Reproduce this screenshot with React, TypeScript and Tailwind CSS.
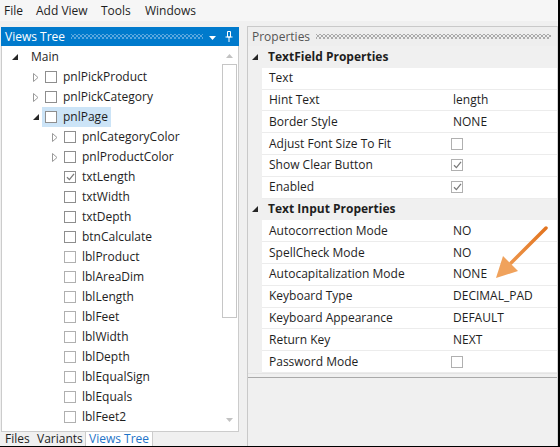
import React from "react";

type Node = {
  label: string;
  level: number;
  exp?: "open" | "closed";
  checked?: boolean;
  selected?: boolean;
};

const tree: Node[] = [
  { label: "Main", level: 0, exp: "open" },
  { label: "pnlPickProduct", level: 1, exp: "closed" },
  { label: "pnlPickCategory", level: 1, exp: "closed" },
  { label: "pnlPage", level: 1, exp: "open", selected: true },
  { label: "pnlCategoryColor", level: 2, exp: "closed" },
  { label: "pnlProductColor", level: 2, exp: "closed" },
  { label: "txtLength", level: 2, checked: true },
  { label: "txtWidth", level: 2 },
  { label: "txtDepth", level: 2 },
  { label: "btnCalculate", level: 2 },
  { label: "lblProduct", level: 2 },
  { label: "lblAreaDim", level: 2 },
  { label: "lblLength", level: 2 },
  { label: "lblFeet", level: 2 },
  { label: "lblWidth", level: 2 },
  { label: "lblDepth", level: 2 },
  { label: "lblEqualSign", level: 2 },
  { label: "lblEquals", level: 2 },
  { label: "lblFeet2", level: 2 },
];

type Prop =
  | { cat: string }
  | { name: string; value?: string; check?: "off" | "on" };

const props: Prop[] = [
  { cat: "TextField Properties" },
  { name: "Text" },
  { name: "Hint Text", value: "length" },
  { name: "Border Style", value: "NONE" },
  { name: "Adjust Font Size To Fit", check: "off" },
  { name: "Show Clear Button", check: "on" },
  { name: "Enabled", check: "on" },
  { cat: "Text Input Properties" },
  { name: "Autocorrection Mode", value: "NO" },
  { name: "SpellCheck Mode", value: "NO" },
  { name: "Autocapitalization Mode", value: "NONE" },
  { name: "Keyboard Type", value: "DECIMAL_PAD" },
  { name: "Keyboard Appearance", value: "DEFAULT" },
  { name: "Return Key", value: "NEXT" },
  { name: "Password Mode", check: "off" },
];

function Expander({ open }: { open: boolean }) {
  return open ? (
    <svg width="6" height="6" viewBox="0 0 6 6">
      <polygon points="6,0 6,6 0,6" fill="#262626" />
    </svg>
  ) : (
    <svg width="6" height="9" viewBox="0 0 6 9">
      <polygon points="0.5,0.5 5,4.5 0.5,8.5" fill="none" stroke="#9a9a9a" />
    </svg>
  );
}

function Checkbox({ checked, light }: { checked?: boolean; light?: boolean }) {
  return (
    <span
      className={`w-[12px] h-[12px] shrink-0 bg-white border flex items-center justify-center ${
        light ? "border-[#b0b0b0]" : "border-[#8e8e8e]"
      }`}
    >
      {checked && (
        <svg width="9" height="8" viewBox="0 0 9 8">
          <path d="M1 4.2 L3.4 6.6 L8 0.8" fill="none" stroke="#7a7a7a" strokeWidth="1.3" />
        </svg>
      )}
    </span>
  );
}

// dotted drag grip in tool window headers
function Grip({ dot }: { dot: string }) {
  return (
    <div className="flex-1 h-[5px] mx-[6px] overflow-hidden">
      <div className={`w-full h-full bg-[length:4px_4px] bg-[position:0_0,2px_2px] ${dot}`} />
    </div>
  );
}

export default function App() {
  return (
    <div className="relative w-[560px] h-[447px] overflow-hidden bg-[#f0f0f0] border-r-2 border-b border-black text-[12px] text-[#1e1e1e] font-['Open_Sans',sans-serif] flex flex-col">
      {/* MENU */}
      <div className="h-[21px] shrink-0 flex items-center pl-[4px] bg-[#f6f6f6] leading-none">
        <span className="w-[32px]">File</span>
        <span className="w-[65px]">Add View</span>
        <span className="w-[44px]">Tools</span>
        <span>Windows</span>
      </div>

      <div className="flex-1 flex min-h-0">
        {/* LEFT: VIEWS TREE */}
        <div className="ml-[1px] mt-[6px] w-[238px] flex flex-col">
          <div className="h-[19px] shrink-0 bg-[#007acc] text-white flex items-center pl-[4px] pr-[6px] leading-none">
            <span>Views Tree</span>
            <Grip dot="bg-[radial-gradient(circle,#5fa9e0_0.7px,transparent_0.9px),radial-gradient(circle,#5fa9e0_0.7px,transparent_0.9px)]" />
            <svg width="7" height="4" viewBox="0 0 7 4" className="mr-[9px] mt-[2px]">
              <polygon points="0,0 7,0 3.5,4" fill="#fff" />
            </svg>
            <svg width="8" height="11" viewBox="0 0 8 11">
              <path d="M2.5 0.5 H5.5 V6 H2.5 Z M0.5 6 H7.5 M4 6 V11" fill="none" stroke="#fff" />
            </svg>
          </div>

          <div className="flex-1 min-h-0 bg-white border-x border-b border-[#cccccc] flex">
            <div className="flex-1 pt-[1px]">
              {tree.map((n) => (
                <div key={n.label} className="h-[20px] flex items-center leading-none">
                  {n.level === 0 ? (
                    <div className="flex items-center pl-[10px]">
                      <span className="w-[19px] flex">
                        <Expander open />
                      </span>
                      <span>{n.label}</span>
                    </div>
                  ) : (
                    <div className="flex items-center" style={{ paddingLeft: 31 + 19 * (n.level - 1) }}>
                      <span className="w-[9px] flex">
                        {n.exp && <Expander open={n.exp === "open"} />}
                      </span>
                      <span
                        className={`h-[20px] flex items-center gap-[6px] px-[3px] ${
                          n.selected ? "bg-[#cce4f7]" : ""
                        }`}
                      >
                        <Checkbox checked={n.checked} light={n.label.startsWith("lbl")} />
                        <span>{n.label}</span>
                      </span>
                    </div>
                  )}
                </div>
              ))}
            </div>
            {/* scrollbar */}
            <div className="w-[15px] mr-[1px] flex flex-col">
              <div className="h-[16px] mt-[2px] flex items-center justify-center">
                <svg width="7" height="4" viewBox="0 0 7 4">
                  <polygon points="0,4 7,4 3.5,0" fill="#c2c2c2" />
                </svg>
              </div>
              <div className="h-[254px] border border-[#c6c6c6] bg-white" />
              <div className="flex-1" />
              <div className="h-[16px] mb-[3px] flex items-center justify-center">
                <svg width="7" height="4" viewBox="0 0 7 4">
                  <polygon points="0,0 7,0 3.5,4" fill="#c2c2c2" />
                </svg>
              </div>
            </div>
          </div>

          <div className="h-[14px] shrink-0 flex items-stretch text-[12px] leading-none">
            <span className="pl-[4px] w-[36px] flex items-center">Files</span>
            <span className="w-[48px] flex items-center">Variants</span>
            <span className="px-[3px] bg-white border-x border-[#cccccc] text-[#1e73c8] flex items-center">Views Tree</span>
          </div>
        </div>

        {/* RIGHT: PROPERTIES */}
        <div className="ml-[8px] mt-[5px] flex-1 flex flex-col border-l border-t border-[#c9c9c9] border-r border-r-[#d6d6d6]">
          <div className="h-[19px] shrink-0 flex items-center pl-[4px] text-[#555555] leading-none bg-[#eeeeee]">
            <span>Properties</span>
            <Grip dot="bg-[radial-gradient(circle,#a8a8a8_0.7px,transparent_0.9px),radial-gradient(circle,#a8a8a8_0.7px,transparent_0.9px)]" />
          </div>

          <div className="shrink-0">
            {props.map((p, i) =>
              "cat" in p ? (
                <div key={i} className="h-[21.8px] flex items-center bg-[#f0f0f0] leading-none">
                  <span className="w-[20px] pl-[4px] flex">
                    <Expander open />
                  </span>
                  <span className="font-bold">{p.cat}</span>
                </div>
              ) : (
                <div key={i} className="h-[21.8px] flex bg-[#f0f0f0] leading-none">
                  <div className="ml-[14px] flex-1 flex bg-white border-b border-[#ececec]">
                    <div className="w-[187px] pl-[7px] flex items-center">{p.name}</div>
                    <div className="flex-1 flex items-center pl-[4px]">
                      {p.value}
                      {p.check && (
                        <span className="-ml-[2px] flex">
                          <Checkbox checked={p.check === "on"} light />
                        </span>
                      )}
                    </div>
                  </div>
                </div>
              )
            )}
          </div>

          <div className="h-[4px] shrink-0 border-t border-[#e4e4e4]" />
          <div className="flex-1 border-t border-[#a9a9a9] bg-[#f0f0f0]" />
        </div>
      </div>

      {/* annotation arrow */}
      <svg className="absolute left-0 top-0 pointer-events-none" width="560" height="447" viewBox="0 0 560 447">
        <defs>
          <linearGradient id="ag" x1="547" y1="227" x2="496" y2="278" gradientUnits="userSpaceOnUse">
            <stop offset="0" stopColor="#e2731e" />
            <stop offset="1" stopColor="#f0a25c" />
          </linearGradient>
        </defs>
        <path d="M546 228 L511 263" stroke="url(#ag)" strokeWidth="3.5" strokeLinecap="round" />
        <polygon points="496,278 503,256 518,271" fill="#f0a25c" />
      </svg>
    </div>
  );
}
